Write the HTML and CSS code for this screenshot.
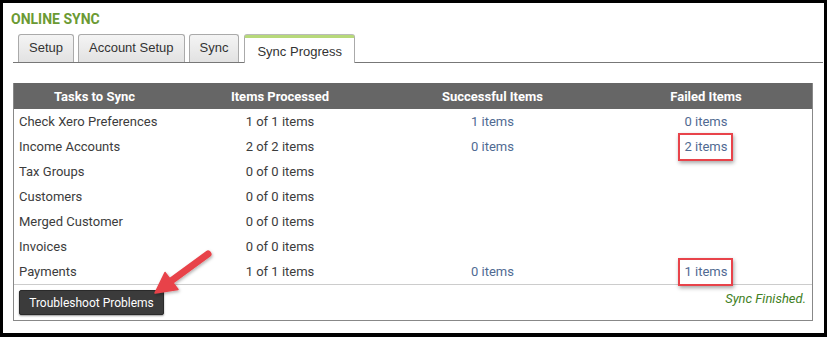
FILE: index.html
```html
<!DOCTYPE html>
<html>
<head>
<meta charset="utf-8">
<link rel="stylesheet" href="styles.css">
</head>
<body>
<div class="frame">
  <h1 class="title">ONLINE SYNC</h1>
  <div class="tabs">
    <div class="tab">Setup</div>
    <div class="tab">Account Setup</div>
    <div class="tab tab-gap">Sync</div>
    <div class="tab active">Sync Progress</div>
  </div>
  <div class="panel">
    <table class="grid">
      <colgroup>
        <col class="c1"><col class="c2"><col class="c3"><col class="c4">
      </colgroup>
      <thead>
        <tr><th>Tasks to Sync</th><th>Items Processed</th><th>Successful Items</th><th>Failed Items</th></tr>
      </thead>
      <tbody>
        <tr><td>Check Xero Preferences</td><td>1 of 1 items</td><td><span class="link">1 items</span></td><td><span class="link">0 items</span></td></tr>
        <tr><td>Income Accounts</td><td>2 of 2 items</td><td><span class="link">0 items</span></td><td><span class="link hl">2 items</span></td></tr>
        <tr><td>Tax Groups</td><td>0 of 0 items</td><td></td><td></td></tr>
        <tr><td>Customers</td><td>0 of 0 items</td><td></td><td></td></tr>
        <tr><td>Merged Customer</td><td>0 of 0 items</td><td></td><td></td></tr>
        <tr><td>Invoices</td><td>0 of 0 items</td><td></td><td></td></tr>
        <tr><td>Payments</td><td>1 of 1 items</td><td><span class="link">0 items</span></td><td><span class="link hl">1 items</span></td></tr>
      </tbody>
    </table>
    <div class="footer">
      <button class="btn">Troubleshoot Problems</button>
      <span class="status">Sync Finished.</span>
    </div>
  </div>
</div>
<svg class="arrow" width="827" height="337" viewBox="0 0 827 337">
  <defs>
    <filter id="sh" x="-20%" y="-20%" width="140%" height="140%">
      <feDropShadow dx="1" dy="1.5" stdDeviation="1.5" flood-color="#000" flood-opacity="0.3"/>
    </filter>
  </defs>
  <g filter="url(#sh)" fill="#e8434a" stroke="#e8434a">
    <line x1="208" y1="254" x2="171" y2="281" stroke-width="7" stroke-linecap="round"/>
    <polygon points="155,293 165,272.5 178,289.5" stroke-width="1.5" stroke-linejoin="round"/>
  </g>
</svg>
</body>
</html>
```

FILE: styles.css
```css
html, body {
  margin: 0;
  padding: 0;
}
body {
  background: #000;
  position: relative;
  width: 827px;
  height: 337px;
  overflow: hidden;
  font-family: Roboto, "Liberation Sans", sans-serif;
}
.frame {
  margin: 3px 3px 0 3px;
  height: 330px;
  background: #fff;
  padding: 8px 1px 0 10px;
  box-sizing: border-box;
}
.title {
  margin: 0 0 7px -2px;
  font-size: 14px;
  line-height: 16px;
  font-weight: 700;
  color: #6b9a33;
}
.tabs {
  display: flex;
  align-items: flex-end;
  padding-left: 5px;
  border-bottom: 1px solid #777;
  height: 28px;
}
.tab {
  font-family: "Liberation Sans", Arial, sans-serif;
  font-size: 13px;
  color: #333;
  height: 27px;
  line-height: 26px;
  padding: 0 10px;
  margin-right: 4px;
  border: 1px solid #aaa;
  border-bottom: none;
  border-radius: 3px 3px 0 0;
  background: linear-gradient(#f4f4f4, #e2e2e2);
}
.tab-gap {
  margin-right: 5px;
}
.tab.active {
  padding: 0 12px;
  margin-bottom: -1px;
  background: #fff;
  border-top: 3px solid #b7d97a;
  box-shadow: 0 -1px 0 #bbb;
  height: 25px;
  line-height: 27px;
}
.panel {
  margin: 20px 10px 0 0;
  border: 1px solid #888;
  border-top: none;
}
.grid {
  width: 100%;
  border-collapse: collapse;
  table-layout: fixed;
}
.c1 { width: 161px; }
.c2 { width: 210px; }
.c3 { width: 215px; }
.c4 { width: 212px; }
.grid th {
  background: #666;
  color: #fff;
  font-size: 13px;
  font-weight: 700;
  height: 26px;
  padding: 0;
  text-align: center;
}
.grid td {
  height: 25px;
  padding: 0;
  font-size: 13px;
  color: #3c3c3c;
  text-align: center;
}
.grid td:first-child {
  text-align: left;
  padding-left: 5px;
}
.link {
  color: #506a92;
}
.hl {
  position: relative;
  display: inline-block;
  line-height: 15px;
}
.hl::after {
  content: "";
  position: absolute;
  left: -7px;
  right: -6px;
  top: -6px;
  bottom: -7px;
  border: 2px solid #e8434a;
  box-shadow: 1px 2px 4px rgba(0, 0, 0, 0.35);
}
.footer {
  border-top: 1px solid #ccc;
  height: 36px;
  padding: 5px 6px 0 5px;
  box-sizing: border-box;
  display: flex;
  justify-content: space-between;
  align-items: flex-start;
}
.btn {
  width: 145px;
  height: 25px;
  background: #3b3b3b;
  color: #fff;
  border: 1px solid #2a2a2a;
  border-radius: 2px;
  font-family: Roboto, sans-serif;
  font-size: 12px;
  padding: 0;
  box-shadow: 0 1px 2px rgba(0, 0, 0, 0.4);
}
.status {
  font-style: italic;
  font-size: 13px;
  color: #3f7f25;
  line-height: 15px;
  margin-top: 1px;
}
.arrow {
  position: absolute;
  left: 0;
  top: 0;
  pointer-events: none;
}
```
